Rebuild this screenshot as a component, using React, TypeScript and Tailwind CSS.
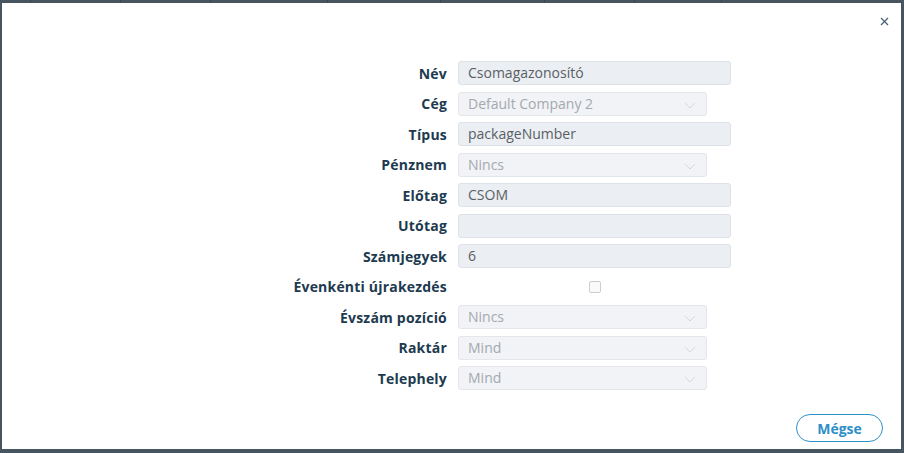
import React from "react";

const Chevron = () => (
  <svg width="12" height="7" viewBox="0 0 12 7" className="absolute right-[10px] top-[9px]">
    <path d="M1 1l5 5 5-5" fill="none" stroke="#d3d8de" strokeWidth="1" />
  </svg>
);

const TextField = ({ value }: { value: string }) => (
  <div className="h-[24px] w-[273px] rounded-[3px] border border-[#dde2e8] bg-[#ebeef2] px-[9px] text-[14px] leading-[22px] text-[#5a5f66]">
    {value}
  </div>
);

const SelectField = ({ value }: { value: string }) => (
  <div className="relative h-[24px] w-[249px] rounded-[3px] border border-[#e3e7ec] bg-[#f1f3f6] px-[9px] text-[14px] leading-[22px] text-[#a4a9af]">
    {value}
    <Chevron />
  </div>
);

const Row = ({ label, children }: { label: string; children: React.ReactNode }) => (
  <div className="flex h-[24px] items-center">
    <div className="w-[200px] whitespace-nowrap text-right text-[14px] font-bold tracking-[0.2px] text-[#1d3a4f]">{label}</div>
    <div className="ml-[11px]">{children}</div>
  </div>
);

const App = () => {
  const tops = [30, 120, 210, 327, 440, 544, 634, 721];
  return (
    <div
      className="flex h-[453px] w-[904px] flex-col bg-[#46555f] pl-[2px] pr-[3px] pt-[3px] pb-[4px]"
      style={{ fontFamily: '"Open Sans", "Liberation Sans", sans-serif' }}
    >
      <div className="pointer-events-none absolute left-0 top-0 flex h-[3px] w-[904px]">
        {tops.map((x) => (
          <div key={x} className="absolute top-0 h-[3px] w-px bg-[#3a4750]" style={{ left: x }} />
        ))}
      </div>
      <div className="relative flex flex-1 flex-col bg-white">
        <button className="absolute right-[12px] top-[14px] text-[#4a6378]">
          <svg width="9" height="9" viewBox="0 0 9 9">
            <path d="M1 1l7 7M8 1l-7 7" stroke="currentColor" strokeWidth="1.3" />
          </svg>
        </button>
        <div className="flex flex-col gap-[6.5px] pl-[245px] pt-[58px]">
          <Row label="Név"><TextField value="Csomagazonosító" /></Row>
          <Row label="Cég"><SelectField value="Default Company 2" /></Row>
          <Row label="Típus"><TextField value="packageNumber" /></Row>
          <Row label="Pénznem"><SelectField value="Nincs" /></Row>
          <Row label="Előtag"><TextField value="CSOM" /></Row>
          <Row label="Utótag"><TextField value="" /></Row>
          <Row label="Számjegyek"><TextField value="6" /></Row>
          <Row label="Évenkénti újrakezdés">
            <div className="flex w-[273px] justify-center">
              <div className="h-[12px] w-[12px] rounded-[2px] border border-[#c9cdd2] bg-[#fafafa]" />
            </div>
          </Row>
          <Row label="Évszám pozíció"><SelectField value="Nincs" /></Row>
          <Row label="Raktár"><SelectField value="Mind" /></Row>
          <Row label="Telephely"><SelectField value="Mind" /></Row>
        </div>
        <div className="mt-auto flex justify-end pb-[7px] pr-[18px]">
          <button className="h-[28px] w-[87px] rounded-full border border-[#2e8fc8] text-[14px] font-bold text-[#2e8fc8]">
            Mégse
          </button>
        </div>
      </div>
    </div>
  );
};

export default App;
